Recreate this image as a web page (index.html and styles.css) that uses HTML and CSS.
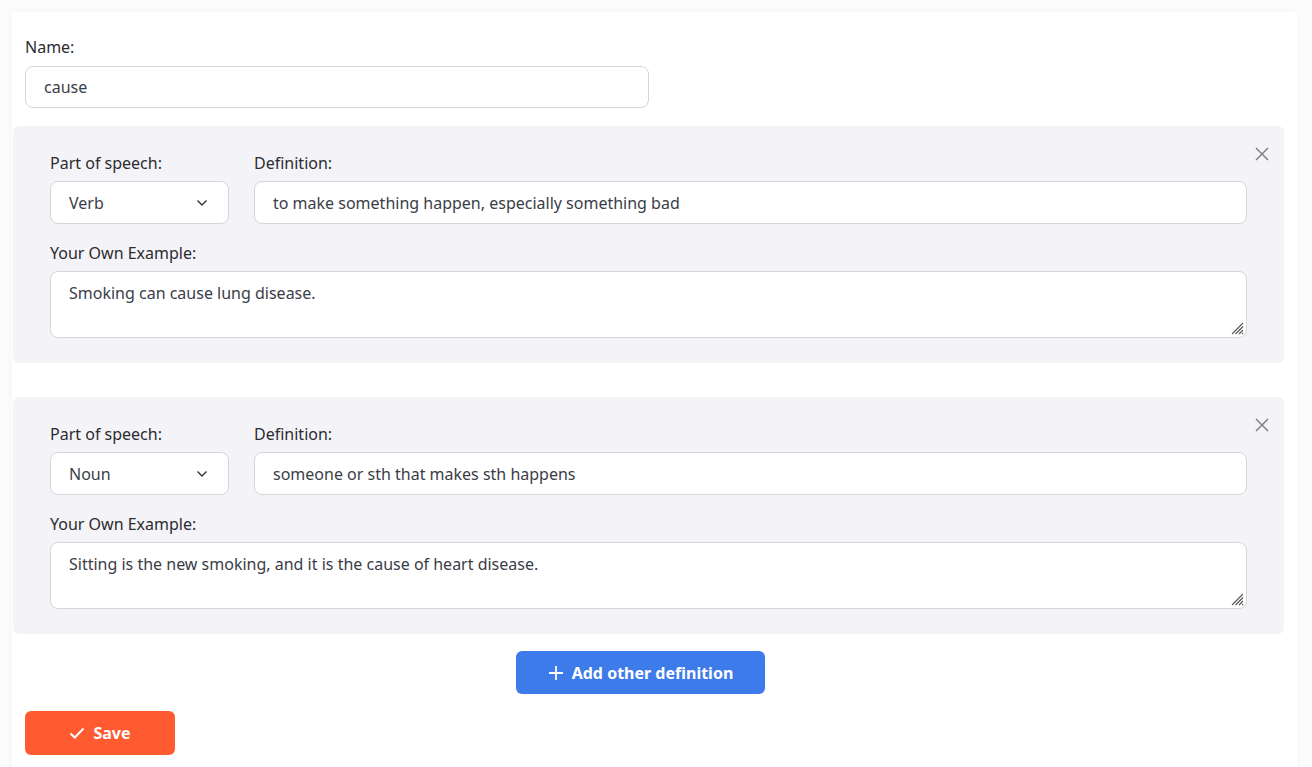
FILE: index.html
```html
<!DOCTYPE html>
<html lang="en">
<head>
<meta charset="utf-8">
<title>Word</title>
<link rel="stylesheet" href="styles.css">
</head>
<body>
<div class="card">
  <div class="field name-field">
    <label class="label">Name:</label>
    <div class="input name-input">cause</div>
  </div>

  <div class="def-box">
    <button class="close" aria-label="Remove">
      <svg width="14" height="14" viewBox="0 0 14 14"><path d="M1 1L13 13M13 1L1 13" stroke="#7a7a7a" stroke-width="1.4" fill="none"/></svg>
    </button>
    <div class="row">
      <div class="field pos">
        <label class="label">Part of speech:</label>
        <div class="input select"><span>Verb</span>
          <svg width="12" height="8" viewBox="0 0 12 8"><path d="M1.5 1.5L6 6L10.5 1.5" stroke="#333" stroke-width="1.4" fill="none"/></svg>
        </div>
      </div>
      <div class="field def">
        <label class="label">Definition:</label>
        <div class="input">to make something happen, especially something bad</div>
      </div>
    </div>
    <div class="field">
      <label class="label">Your Own Example:</label>
      <div class="input textarea">Smoking can cause lung disease.
        <svg class="grip" width="14" height="14" viewBox="0 0 14 14"><path d="M13 2L2 13M13 5.5L5.5 13M13 9L9 13M13 12L12 13" stroke="#555" stroke-width="1.1" fill="none"/></svg>
      </div>
    </div>
  </div>

  <div class="def-box">
    <button class="close" aria-label="Remove">
      <svg width="14" height="14" viewBox="0 0 14 14"><path d="M1 1L13 13M13 1L1 13" stroke="#7a7a7a" stroke-width="1.4" fill="none"/></svg>
    </button>
    <div class="row">
      <div class="field pos">
        <label class="label">Part of speech:</label>
        <div class="input select"><span>Noun</span>
          <svg width="12" height="8" viewBox="0 0 12 8"><path d="M1.5 1.5L6 6L10.5 1.5" stroke="#333" stroke-width="1.4" fill="none"/></svg>
        </div>
      </div>
      <div class="field def">
        <label class="label">Definition:</label>
        <div class="input">someone or sth that makes sth happens</div>
      </div>
    </div>
    <div class="field">
      <label class="label">Your Own Example:</label>
      <div class="input textarea">Sitting is the new smoking, and it is the cause of heart disease.
        <svg class="grip" width="14" height="14" viewBox="0 0 14 14"><path d="M13 2L2 13M13 5.5L5.5 13M13 9L9 13M13 12L12 13" stroke="#555" stroke-width="1.1" fill="none"/></svg>
      </div>
    </div>
  </div>

  <div class="add-wrap">
    <button class="btn btn-blue">
      <svg width="16" height="16" viewBox="0 0 16 16"><path d="M8 1V15M1 8H15" stroke="#fff" stroke-width="1.8" fill="none"/></svg>
      Add other definition
    </button>
  </div>
  <button class="btn btn-orange">
    <svg width="16" height="14" viewBox="0 0 16 14"><path d="M1.5 7.5L5.8 11.5L14.5 2.5" stroke="#fff" stroke-width="2" fill="none"/></svg>
    Save
  </button>
</div>
</body>
</html>
```

FILE: styles.css
```css
* { box-sizing: border-box; }
html, body { margin: 0; padding: 0; background: #fcfcfc; }
body {
  font-family: "Noto Sans", "Open Sans", sans-serif;
  color: #2e2e33;
  padding: 12px 15px 0 12px;
}
.card {
  background: #fff;
  box-shadow: 0 0 8px rgba(0,0,0,0.04);
  padding: 24px 13px 12px 1px;
  min-height: 760px;
}
.field { display: flex; flex-direction: column; }
.label {
  font-size: 16px;
  line-height: 22px;
  color: #2b2b30;
  margin-bottom: 7px;
}
.name-field { padding-left: 12px; margin-bottom: 18px; }
.name-field .label { margin-bottom: 8px; }
.input {
  background: #fff;
  border: 1px solid #d6d6da;
  border-radius: 8px;
  height: 43px;
  padding: 0 18px;
  font-size: 16px;
  color: #3a3d48;
  display: flex;
  align-items: center;
}
.name-input { width: 624px; height: 42px; }
.def-box {
  position: relative;
  background: #f4f4f8;
  border-radius: 6px;
  padding: 26px 37px 25px 37px;
  margin-bottom: 34px;
}
.def-box + .def-box { margin-bottom: 17px; }
.close {
  position: absolute;
  top: 21px;
  right: 15px;
  background: none;
  border: 0;
  padding: 0;
  width: 14px;
  height: 14px;
  cursor: pointer;
}
.close svg { display: block; }
.row { display: flex; gap: 25px; margin-bottom: 18px; }
.pos { width: 179px; flex: none; }
.def { flex: 1; }
.select { justify-content: space-between; padding-right: 20px; }
.textarea {
  position: relative;
  height: 67px;
  align-items: flex-start;
  padding-top: 10px;
  line-height: 22px;
}
.grip { position: absolute; right: 2px; bottom: 2px; }
.add-wrap { display: flex; justify-content: center; margin-bottom: 17px; padding-right: 16px; }
.btn {
  display: inline-flex;
  align-items: center;
  justify-content: center;
  gap: 8px;
  border: 0;
  border-radius: 6px;
  color: #fff;
  font-family: "Noto Sans", "Open Sans", sans-serif;
  font-weight: 700;
  font-size: 16px;
  height: 43px;
  cursor: pointer;
}
.btn-blue { background: #3d7bea; width: 249px; }
.btn-orange { background: #ff5a30; width: 150px; height: 44px; margin-left: 12px; }
```
